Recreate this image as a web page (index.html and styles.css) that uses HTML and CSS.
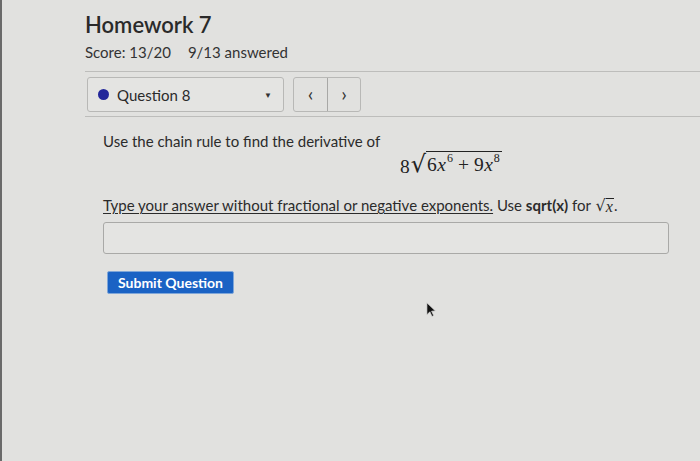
FILE: index.html
```html
<!DOCTYPE html>
<html>
<head>
<meta charset="utf-8">
<link rel="stylesheet" href="styles.css">
</head>
<body>
<div class="page">
  <header class="head">
    <h1 class="title">Homework 7</h1>
    <div class="score"><span>Score: 13/20</span><span>9/13 answered</span></div>
  </header>
  <div class="navbar">
    <div class="select">
      <span class="dot"></span>
      <span class="qlabel">Question 8</span>
      <span class="caret">&#9660;</span>
    </div>
    <div class="navbtns">
      <span class="nb">&lsaquo;</span>
      <span class="nb">&rsaquo;</span>
    </div>
  </div>
  <main class="question">
    <p class="prompt">Use the chain rule to find the derivative of</p>
    <div class="math">
      <span class="m">8</span><span class="radical">&#8730;</span><span class="radicand"><span class="m">6<i>x</i><sup>6</sup><span class="op">+</span>9<i>x</i><sup>8</sup></span></span>
    </div>
    <p class="instr"><span class="u">Type your answer without fractional or negative exponents.</span> Use <b>sqrt(x)</b> for <span class="sm"><span class="radical small">&#8730;</span><span class="radicand small"><i>x</i></span></span>.</p>
    <div class="answer"></div>
    <button class="submit">Submit Question</button>
    <svg class="cursor" width="12" height="17" viewBox="0 0 14 20"><path d="M1 1 L1 15 L4.5 11.5 L7 17 L9 16 L6.5 10.8 L11 10.5 Z" fill="#111" stroke="#ddd" stroke-width="0.8"/></svg>
  </main>
</div>
</body>
</html>
```
FILE: styles.css
```css
html, body { margin: 0; padding: 0; }
body {
  width: 700px;
  height: 461px;
  overflow: hidden;
  background: #e1e1df;
  font-family: Lato, "Open Sans", sans-serif;
  color: #2b2b2b;
  border-left: 2px solid #6a6a6a;
  box-sizing: border-box;
}
.page { padding: 12px 0 0 83px; position: relative; }
.title { margin: 0; font-size: 22px; font-weight: 600; line-height: 26px; color: #2a2a2a; }
.score { display: flex; gap: 17px; font-size: 15px; margin-top: 6px; line-height: 17px; color: #333; }
.navbar {
  margin-top: 10px;
  border-top: 1.5px solid #bdbdbb;
  border-bottom: 1.5px solid #bdbdbb;
  padding: 5px 0 4px 2px;
  display: flex;
  gap: 9px;
}
.select {
  width: 197px; height: 35px;
  border: 1px solid #b8b8b6; border-radius: 3px;
  display: flex; align-items: center;
  box-sizing: border-box;
  padding-left: 10px;
  background: #e4e4e2;
}
.dot { width: 11px; height: 11px; border-radius: 50%; background: #23279a; }
.qlabel { margin-left: 8px; font-size: 15px; color: #2a2a2a; }
.caret { margin-left: auto; margin-right: 11px; font-size: 8px; color: #333; }
.navbtns {
  display: flex; height: 35px;
  border: 1px solid #b8b8b6; border-radius: 3px;
  box-sizing: border-box;
}
.nb { width: 33px; display: flex; align-items: center; justify-content: center; font-size: 20px; color: #333; line-height: 1; padding-bottom: 3px; box-sizing: border-box; }
.nb + .nb { border-left: 1px solid #a8a8a6; }
.question { padding-left: 18px; position: relative; }
.prompt { margin: 15px 0 0; font-size: 15px; line-height: 18px; color: #2b2b2b; }
.math {
  display: flex; align-items: flex-end;
  margin: 0 0 0 297px;
  font-family: "Liberation Serif", "DejaVu Serif", serif;
  font-size: 19.5px; color: #222;
  height: 26px;
}
.m { line-height: 19px; }
.m i { font-style: italic; margin-left: 0.5px; }
.m sup { font-size: 12px; vertical-align: 9px; line-height: 0; margin-left: 1px; }
.op { margin: 0 5px; }
.radical { font-family: "DejaVu Serif", serif; font-size: 24px; line-height: 24px; margin-left: 1px; }
.radicand { border-top: 1px solid #222; padding: 2px 2px 0 1px; }
.instr { margin: 20px 0 0; font-size: 15px; line-height: 18px; color: #2b2b2b; }
.u { text-decoration: underline; text-decoration-thickness: 1px; text-underline-offset: 2px; }
.instr b { font-weight: 700; }
.sm { display: inline-flex; align-items: flex-end; font-family: "Liberation Serif", serif; }
.radical.small { font-size: 16px; line-height: 16px; }
.radicand.small { font-size: 16px; line-height: 14px; padding: 1px 1px 0 0; }
.answer {
  margin-top: 8px;
  width: 566px; height: 32px;
  border: 1.5px solid #a9a9a7; border-radius: 3px;
  box-sizing: border-box;
  background: #e4e4e2;
}
.submit {
  display: block;
  margin: 17px 0 0 4px;
  height: 23px; padding: 0 10px;
  background: #1a62c4; color: #fff;
  border: 1px solid #7fa6d8; border-radius: 2px;
  font-family: Lato, sans-serif; font-size: 14px; font-weight: 700;
}
.cursor { position: absolute; left: 341px; top: 170px; }
```
